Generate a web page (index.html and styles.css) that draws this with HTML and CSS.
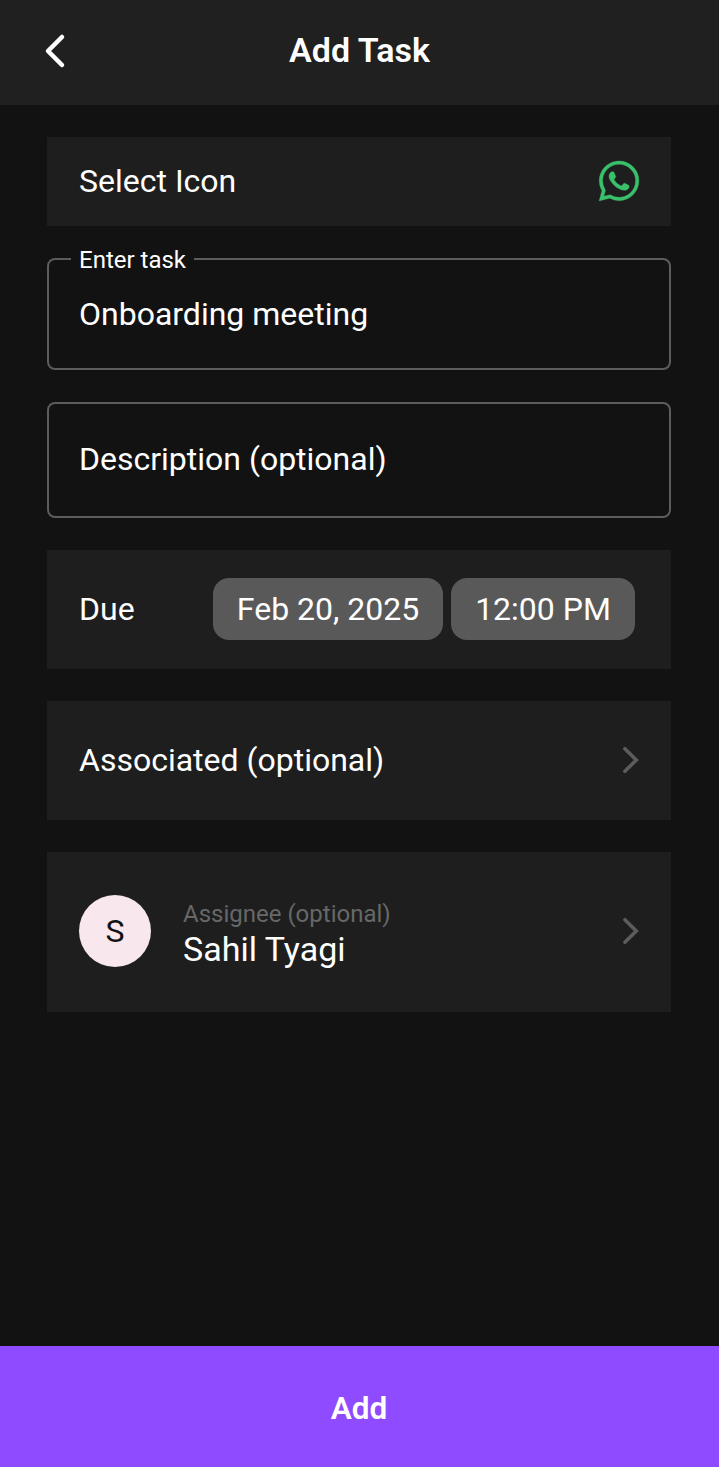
FILE: index.html
```html
<!DOCTYPE html>
<html lang="en">
<head>
<meta charset="utf-8">
<title>Add Task</title>
<link rel="stylesheet" href="styles.css">
</head>
<body>
<div class="screen">
  <header class="header">
    <svg class="back" viewBox="0 0 24 36"><path d="M19 4 5 18l14 14"/></svg>
    <h1 class="title">Add Task</h1>
  </header>
  <main class="form">
    <div class="row row-icon">
      <span class="label">Select Icon</span>
      <svg class="whatsapp" viewBox="0 0 24 24"><path d="M17.472 14.382c-.297-.149-1.758-.867-2.03-.967-.273-.099-.471-.148-.67.15-.197.297-.767.966-.94 1.164-.173.199-.347.223-.644.075-.297-.15-1.255-.463-2.39-1.475-.883-.788-1.48-1.761-1.653-2.059-.173-.297-.018-.458.13-.606.134-.133.298-.347.446-.52.149-.174.198-.298.298-.497.099-.198.05-.371-.025-.52-.075-.149-.669-1.612-.916-2.207-.242-.579-.487-.5-.669-.51-.173-.008-.371-.01-.57-.01-.198 0-.52.074-.792.372-.272.297-1.04 1.016-1.04 2.479 0 1.462 1.065 2.875 1.213 3.074.149.198 2.096 3.2 5.077 4.487.709.306 1.262.489 1.694.625.712.227 1.36.195 1.871.118.571-.085 1.758-.719 2.006-1.413.248-.694.248-1.289.173-1.413-.074-.124-.272-.198-.57-.347m-5.421 7.403h-.004a9.87 9.87 0 0 1-5.031-1.378l-.361-.214-3.741.982.998-3.648-.235-.374a9.86 9.86 0 0 1-1.51-5.26c.001-5.45 4.436-9.884 9.888-9.884 2.64 0 5.122 1.03 6.988 2.898a9.825 9.825 0 0 1 2.893 6.994c-.003 5.45-4.437 9.884-9.885 9.884m8.413-18.297A11.815 11.815 0 0 0 12.05 0C5.495 0 .16 5.335.157 11.892c0 2.096.547 4.142 1.588 5.945L.057 24l6.305-1.654a11.882 11.882 0 0 0 5.683 1.448h.005c6.554 0 11.89-5.335 11.893-11.893a11.821 11.821 0 0 0-3.48-8.413z"/></svg>
    </div>
    <fieldset class="field">
      <legend class="legend">Enter task</legend>
      <span class="label">Onboarding meeting</span>
    </fieldset>
    <div class="box"><span class="label">Description (optional)</span></div>
    <div class="row row-due">
      <span class="label">Due</span>
      <div class="chips"><span class="chip chip-date">Feb 20, 2025</span><span class="chip chip-time">12:00 PM</span></div>
    </div>
    <div class="row row-associated">
      <span class="label">Associated (optional)</span>
      <svg class="chevron" viewBox="0 0 18 28"><path d="M3.9 2.7 15.3 14 3.9 25.3"/></svg>
    </div>
    <div class="row row-assignee">
      <span class="avatar">S</span>
      <div class="person"><span class="caption">Assignee (optional)</span><span class="name">Sahil Tyagi</span></div>
      <svg class="chevron" viewBox="0 0 18 28"><path d="M3.9 2.7 15.3 14 3.9 25.3"/></svg>
    </div>
  </main>
  <button class="add">Add</button>
</div>
</body>
</html>
```
FILE: styles.css
```css
* { box-sizing: border-box; }
body { margin: 0; background: #121212; color: #fff; font-family: Roboto, sans-serif; font-size: 32px; }
.screen { display: flex; flex-direction: column; height: 1467px; }
.header { display: grid; grid-template-columns: 48px 1fr 48px; align-items: center; height: 105px; padding: 0 43px 4px; background: #202020; }
.back { width: 24px; height: 36px; fill: none; stroke: #fff; stroke-width: 4.5; stroke-linecap: round; stroke-linejoin: round; }
.title { margin: 0 0 2px; font-size: 34px; font-weight: 600; line-height: 40px; text-align: center; }
.form { display: flex; flex-direction: column; flex: 1; padding: 32px 48px 0 47px; }
.row { display: flex; align-items: center; justify-content: space-between; padding: 0 32px 2px; background: #1e1e1e; }
.label { line-height: 38px; white-space: nowrap; }
.row-icon { height: 89px; }
.whatsapp { width: 40px; height: 40px; fill: #3abf6b; stroke: #3abf6b; stroke-width: .2; overflow: visible; }
.field { min-width: 0; height: 125px; margin: 19px 0 0; padding: 22px 30px 0; border: 2px solid #5c5c5c; border-radius: 8px; }
.legend { margin-left: -8px; padding: 2px 8px 0; font-size: 24px; line-height: 26px; }
.field .label { display: block; }
.box { display: flex; align-items: center; height: 116px; margin-top: 32px; padding: 0 30px 2px; border: 2px solid #5c5c5c; border-radius: 8px; }
.row-due { height: 119px; margin-top: 32px; padding-right: 36px; }
.chips { display: flex; gap: 8px; }
.chip { display: flex; align-items: center; justify-content: center; height: 62px; border-radius: 16px; background: #595959; }
.chip-date { width: 230px; }
.chip-time { width: 184px; }
.row-associated { height: 119px; margin-top: 32px; }
.chevron { width: 18px; height: 28px; fill: none; stroke: #5c5c5c; stroke-width: 3.6; stroke-linecap: round; }
.row-assignee { height: 160px; margin-top: 32px; }
.avatar { display: flex; align-items: center; justify-content: center; width: 72px; height: 72px; border-radius: 50%; background: #f8e7ed; color: #121212; }
.person { display: flex; flex-direction: column; flex: 1; margin-left: 32px; padding-top: 6px; }
.caption { color: #666868; font-size: 24px; line-height: 30px; }
.name { font-size: 34px; line-height: 40px; }
.add { height: 121px; padding: 4px 1px 0 0; border: 0; background: #8f4bff; color: #fff; font: 600 31.5px Roboto, sans-serif; }
```
